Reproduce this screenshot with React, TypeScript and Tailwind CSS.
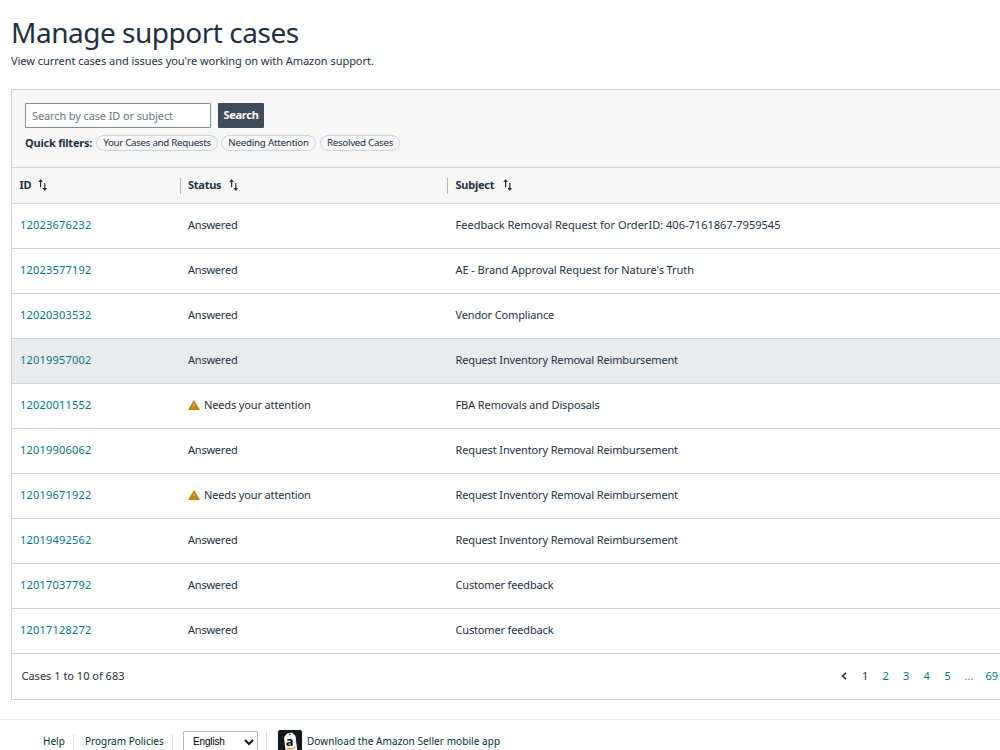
const cases = [
  { id: "12023676232", subject: "Feedback Removal Request for OrderID: 406-7161867-7959545", tracking: "tracking-[0.02px]" },
  { id: "12023577192", subject: "AE - Brand Approval Request for Nature's Truth", tracking: "tracking-[-0.07px]" },
  { id: "12020303532", subject: "Vendor Compliance" },
  { id: "12019957002", subject: "Request Inventory Removal Reimbursement", active: true },
  { id: "12020011552", subject: "FBA Removals and Disposals", attention: true, tracking: "tracking-[-0.11px]" },
  { id: "12019906062", subject: "Request Inventory Removal Reimbursement" },
  { id: "12019671922", subject: "Request Inventory Removal Reimbursement", attention: true },
  { id: "12019492562", subject: "Request Inventory Removal Reimbursement" },
  { id: "12017037792", subject: "Customer feedback", tracking: "tracking-[-0.16px]" },
  { id: "12017128272", subject: "Customer feedback", tracking: "tracking-[-0.16px]" },
];

function SortIcon({ className }: { className: string }) {
  return (
    <svg className={`h-3 w-[10px] ${className}`} viewBox="0 0 10 12" fill="#232f3e">
      <path d="M0.3 2.9L2.6 0L4.9 2.9H3.2V8.2H2V2.9Z" />
      <path d="M4.5 9.1L6.8 12L9.1 9.1H7.4V4H6.2V9.1Z" />
    </svg>
  );
}

function WarningIcon() {
  return (
    <svg className="mr-1 h-[10px] w-3" viewBox="0 0 12 10">
      <path d="M6 0L12 10H0Z" fill="#c28209" />
      <path d="M6 3.8V6.2M6 7.5V8.5" stroke="#f3dfb5" strokeWidth="0.9" />
    </svg>
  );
}

function SellerLogo() {
  return (
    <svg className="ml-[9px] h-6 w-6" viewBox="0 0 24 24">
      <rect width="24" height="24" rx="2" fill="#16191c" />
      <path d="M6 7.5L9 3.5L14 2.5L17.5 6L19.5 22L8 24Z" fill="#fff" />
      <circle cx="11.8" cy="4.6" r="0.8" fill="#16191c" />
      <text x="7.8" y="16" fontFamily="Noto Sans" fontWeight="700" fontSize="13" fill="#111">
        a
      </text>
      <path d="M9 18Q13 20.5 17.5 17" stroke="#f59a23" strokeWidth="1.4" fill="none" />
    </svg>
  );
}

function Pill({ label, className }: { label: string; className: string }) {
  return (
    <button
      className={`flex h-4 items-center justify-center whitespace-nowrap rounded-full border border-[#d0d3d5] pb-px text-[#232f3e] ${className}`}
    >
      {label}
    </button>
  );
}

export default function App() {
  return (
    <div className="h-[750px] w-[1000px] overflow-hidden bg-white font-['Noto_Sans',sans-serif] text-[11px] leading-4 text-[#232f3e]">
      <header className="h-[89px] pl-[11px] pt-[14px]">
        <h1 className="whitespace-nowrap text-[28px] leading-9 tracking-[-0.48px]">Manage support cases</h1>
        <p className="mt-[3px] whitespace-nowrap tracking-[-0.04px]">
          View current cases and issues you're working on with Amazon support.
        </p>
      </header>

      <main className="ml-[11px] h-[611px] border-y border-l border-[#d0d3d5]">
        <div className="h-[78px] border-b border-[#d0d3d5] bg-[#f7f7f7] pl-[13px] pt-[13px]">
          <div className="flex">
            <input
              className="h-[25px] w-[186px] rounded-[1px] border border-[#808b95] bg-white px-1.5 tracking-[-0.12px] placeholder:text-[#6b7580]"
              placeholder="Search by case ID or subject"
            />
            <button className="ml-[7px] h-[25px] w-[46px] rounded-[1px] bg-[#3f4b5a] pb-0.5 font-bold tracking-[-0.25px] text-white">
              Search
            </button>
          </div>
          <div className="mt-[7px] flex h-4 items-center text-[9.75px]">
            <span className="w-[71px] whitespace-nowrap text-[11px] font-bold tracking-[-0.22px]">Quick filters:</span>
            <Pill label="Your Cases and Requests" className="w-[122px] tracking-[-0.3px]" />
            <Pill label="Needing Attention" className="ml-[3px] w-[95px] tracking-[-0.22px]" />
            <Pill label="Resolved Cases" className="ml-1 w-20 tracking-[-0.28px]" />
          </div>
        </div>

        {/* --- Table --- */}
        <div className="flex h-9 items-center border-b border-[#d0d3d5] bg-[#f7f7f7] font-bold tracking-[-0.25px]">
          <div className="flex w-[168px] items-center pb-0.5 pl-[7.5px]">
            ID <SortIcon className="ml-[7px]" />
          </div>
          <div className="flex h-4 w-[267px] items-center border-l border-[#aab7b8] pb-0.5 pl-[7px]">
            Status <SortIcon className="ml-2" />
          </div>
          <div className="flex h-4 items-center border-l border-[#aab7b8] pb-0.5 pl-[7.5px]">
            Subject <SortIcon className="ml-[9px]" />
          </div>
        </div>
        {cases.map((item) => (
          <div
            key={item.id}
            className={`flex h-[45px] items-center whitespace-nowrap border-b border-[#d0d3d5] pb-0.5 ${item.active ? "bg-[#eaebed]" : ""}`}
          >
            <a className="w-[168px] pl-2 tracking-[0.2px] text-[#007885]">{item.id}</a>
            <div className="flex w-[267px] items-center pl-2 tracking-[-0.14px]">
              {item.attention && <WarningIcon />}
              {item.attention ? "Needs your attention" : <span className="tracking-[-0.22px]">Answered</span>}
            </div>
            <div className={`pl-[8.5px] ${item.tracking ?? "tracking-[-0.14px]"}`}>{item.subject}</div>
          </div>
        ))}

        <div className="flex h-[45px] items-center justify-between pb-0.5 pl-[9.5px]">
          <span>Cases 1 to 10 of 683</span>
          <nav className="flex w-[159px] items-center whitespace-nowrap text-[#007885]">
            <svg className="mr-[14px] h-2 w-[7px]" viewBox="0 0 7 8" fill="none" stroke="#232f3e" strokeWidth="1.6">
              <path d="M5 0.8L1.5 4L5 7.2" />
            </svg>
            <span className="w-[20.5px] text-[#232f3e]">1</span>
            <span className="w-[20.5px]">2</span>
            <span className="w-[20.5px]">3</span>
            <span className="w-[21px]">4</span>
            <span className="w-[20px]">5</span>
            <span className="w-[21px] text-[#6b7580]">...</span>
            <span>69</span>
          </nav>
        </div>
      </main>

      <footer className="mt-[19px] flex h-12 items-start whitespace-nowrap border-t border-[#e7e7e7] pl-[43px] pt-[10px] text-[10px] text-[#002f36]">
        <a className="mt-[3px] w-[30px]">Help</a>
        <span className="mt-1 h-4 border-l border-[#e0e0e0]" />
        <a className="ml-[11px] mt-[3px] w-[87px]">Program Policies</a>
        <span className="mt-1 h-4 border-l border-[#e0e0e0]" />
        <div className="ml-[10px] mt-px flex h-[22px] w-[75px] items-center justify-between rounded-[1px] border border-[#b5b5b5] pl-[9px] pr-[3px] font-['Liberation_Sans',sans-serif] tracking-[-0.15px] text-black">
          English
          <svg className="h-[7px] w-[10px]" viewBox="0 0 10 7" fill="none" stroke="#111" strokeWidth="2">
            <path d="M1 1L5 5L9 1" />
          </svg>
        </div>
        <span className="ml-2 mt-px h-5 border-l border-[#e0e0e0]" />
        <div className="ml-[2px] flex">
          <SellerLogo />
          <a className="ml-[5px] mt-[3px] tracking-[0.07px]">Download the Amazon Seller mobile app</a>
        </div>
      </footer>
    </div>
  );
}
